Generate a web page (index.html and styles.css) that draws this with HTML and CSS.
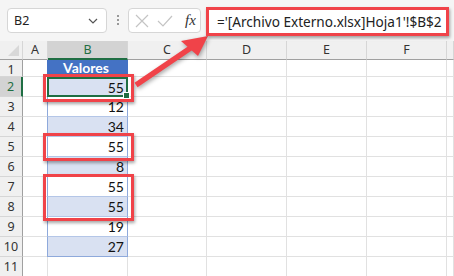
FILE: index.html
```html
<!DOCTYPE html>
<html lang="es">
<head>
  <meta charset="UTF-8">
  <title>Referencia externa</title>
  <link rel="stylesheet" href="styles.css">
</head>
<body>
  <div class="toolbar">
    <div class="name-box">
      <span>B2</span>
      <svg class="chev" width="10" height="6" viewBox="0 0 10 6"><path d="M1 1 L5 5 L9 1" fill="none" stroke="#555" stroke-width="1.2"/></svg>
    </div>
    <div class="dots"><i></i><i></i><i></i></div>
    <div class="fx-box">
      <svg width="14" height="14" viewBox="0 0 14 14"><path d="M1 1 L13 13 M13 1 L1 13" stroke="#c4c4c4" stroke-width="1.2"/></svg>
      <svg width="16" height="12" viewBox="0 0 16 12"><path d="M1 6 L6 11 L15 1" fill="none" stroke="#c4c4c4" stroke-width="1.2"/></svg>
      <span class="fx">fx</span>
    </div>
    <div class="formula">='[Archivo Externo.xlsx]Hoja1'!$B$2</div>
  </div>

  <div class="sheet">
    <div class="hd corner"></div>
    <div class="hd">A</div>
    <div class="hd sel">B</div>
    <div class="hd">C</div>
    <div class="hd">D</div>
    <div class="hd">E</div>
    <div class="hd">F</div>
    <div class="hd"></div>

    <div class="rh">1</div><div class="c"></div><div class="c t th">Valores</div><div class="c"></div><div class="c"></div><div class="c"></div><div class="c"></div><div class="c"></div>
    <div class="rh sel">2</div><div class="c"></div><div class="c t b active">55</div><div class="c"></div><div class="c"></div><div class="c"></div><div class="c"></div><div class="c"></div>
    <div class="rh">3</div><div class="c"></div><div class="c t">12</div><div class="c"></div><div class="c"></div><div class="c"></div><div class="c"></div><div class="c"></div>
    <div class="rh">4</div><div class="c"></div><div class="c t b">34</div><div class="c"></div><div class="c"></div><div class="c"></div><div class="c"></div><div class="c"></div>
    <div class="rh">5</div><div class="c"></div><div class="c t">55</div><div class="c"></div><div class="c"></div><div class="c"></div><div class="c"></div><div class="c"></div>
    <div class="rh">6</div><div class="c"></div><div class="c t b">8</div><div class="c"></div><div class="c"></div><div class="c"></div><div class="c"></div><div class="c"></div>
    <div class="rh">7</div><div class="c"></div><div class="c t">55</div><div class="c"></div><div class="c"></div><div class="c"></div><div class="c"></div><div class="c"></div>
    <div class="rh">8</div><div class="c"></div><div class="c t b">55</div><div class="c"></div><div class="c"></div><div class="c"></div><div class="c"></div><div class="c"></div>
    <div class="rh">9</div><div class="c"></div><div class="c t">19</div><div class="c"></div><div class="c"></div><div class="c"></div><div class="c"></div><div class="c"></div>
    <div class="rh">10</div><div class="c"></div><div class="c t b last">27</div><div class="c"></div><div class="c"></div><div class="c"></div><div class="c"></div><div class="c"></div>
    <div class="rh">11</div><div class="c"></div><div class="c"></div><div class="c"></div><div class="c"></div><div class="c"></div><div class="c"></div><div class="c"></div>
  </div>

  <!-- marcas rojas encima de la hoja -->
  <div class="mark m1"></div>
  <div class="mark m2"></div>
  <div class="mark m3"></div>
  <svg class="arrow" width="454" height="276" viewBox="0 0 454 276">
    <line x1="136" y1="85" x2="192" y2="47" stroke="#f04349" stroke-width="5.5"/>
    <polygon points="208,36 181,41 198,56" fill="#f04349"/>
  </svg>
</body>
</html>
```

FILE: styles.css
```css
body {
  margin: 0;
  width: 454px;
  height: 276px;
  overflow: hidden;
  background: #f5f5f5;
  font-family: "Noto Sans", sans-serif;
  color: #222;
  position: relative;
}

.toolbar {
  height: 41px;
  display: flex;
  align-items: flex-start;
  padding: 8px 0 0 7px;
  box-sizing: border-box;
}
.name-box {
  width: 100px;
  height: 25px;
  background: #fff;
  border: 1px solid #d6d6d6;
  border-radius: 4px;
  box-sizing: border-box;
  display: flex;
  align-items: center;
  justify-content: space-between;
  padding: 0 8px 0 6px;
  font-size: 12.5px;
}
.dots {
  width: 21px;
  display: flex;
  flex-direction: column;
  align-items: center;
  gap: 2px;
  padding-top: 7px;
}
.dots i {
  width: 2px;
  height: 2px;
  background: #999;
}
.fx-box {
  width: 73px;
  height: 25px;
  background: #fff;
  border: 1px solid #d6d6d6;
  border-radius: 4px;
  box-sizing: border-box;
  display: flex;
  align-items: center;
  gap: 8px;
  padding: 0 0 0 6px;
}
.fx {
  font-family: "Liberation Serif", serif;
  font-style: italic;
  font-size: 15px;
  color: #333;
  margin-left: 4px;
}
.formula {
  margin-left: 5px;
  width: 243px;
  height: 29px;
  margin-top: -1px;
  background: #fff;
  border: 3px solid #f04349;
  box-sizing: border-box;
  box-shadow: 1px 2px 3px rgba(0, 0, 0, 0.35);
  padding: 0 0 0 8px;
  font-size: 13.6px;
  line-height: 23px;
  white-space: nowrap;
  position: relative;
  z-index: 2;
}

.sheet {
  display: grid;
  grid-template-columns: 23px 25px 80px 79px 80px 80px 80px 1fr;
  grid-template-rows: 19px 17px repeat(10, 20px);
  background: #fff;
  font-family: "Lato", sans-serif;
}
.hd {
  background: #f0f0f0;
  border-right: 1px solid #d6d6d6;
  border-bottom: 1px solid #a0a0a0;
  box-sizing: border-box;
  font-family: "Noto Sans", sans-serif;
  font-size: 12.5px;
  color: #333;
  text-align: center;
  line-height: 18px;
}
.hd.sel {
  background: #d3d3d3;
  color: #1f6e43;
  border-bottom: 2px solid #1f6e43;
}
.corner {
  position: relative;
}
.corner::after {
  content: "";
  position: absolute;
  right: 3px;
  bottom: 3px;
  border-left: 11px solid transparent;
  border-bottom: 11px solid #d8d8d8;
}
.rh {
  background: #f0f0f0;
  border-right: 1px solid #a0a0a0;
  border-bottom: 1px solid #d6d6d6;
  box-sizing: border-box;
  font-family: "Noto Sans", sans-serif;
  font-size: 12.5px;
  color: #333;
  text-align: center;
  line-height: 19px;
}
.rh.sel {
  background: #d3d3d3;
  color: #1f6e43;
  border-right: 2px solid #1f6e43;
}
.c {
  border-right: 1px solid #e1e1e1;
  border-bottom: 1px solid #e1e1e1;
  box-sizing: border-box;
}
.c.t {
  border-left: 1px solid #8ea9db;
  border-right: 1px solid #8ea9db;
  border-bottom: 1px solid #b4c6e7;
  margin-left: -1px;
  text-align: right;
  padding-right: 3px;
  font-size: 14px;
  line-height: 19px;
  color: #111;
}
.c.b {
  background: #d9e1f2;
}
.c.last {
  border-bottom-color: #8ea9db;
}
.c.th {
  background: #4472c4;
  color: #fff;
  font-weight: bold;
  text-align: center;
  line-height: 16px;
  border-color: #4472c4;
}
.c.active {
  border: 2px solid #1f6e43;
  position: relative;
  padding-right: 2px;
  line-height: 17px;
}
.c.active::after {
  content: "";
  position: absolute;
  right: -4px;
  bottom: -4px;
  width: 5px;
  height: 5px;
  background: #1f6e43;
  border: 1px solid #fff;
}

.mark {
  position: absolute;
  left: 43px;
  width: 91px;
  border: 3px solid #f04349;
  box-sizing: border-box;
  box-shadow: 1px 2px 3px rgba(0, 0, 0, 0.35);
}
.m1 { top: 74px; height: 28px; }
.m2 { top: 133px; height: 28px; }
.m3 { top: 174px; height: 47px; }

.arrow {
  position: absolute;
  left: 0;
  top: 0;
  filter: drop-shadow(1px 2px 2px rgba(0, 0, 0, 0.35));
}
```
